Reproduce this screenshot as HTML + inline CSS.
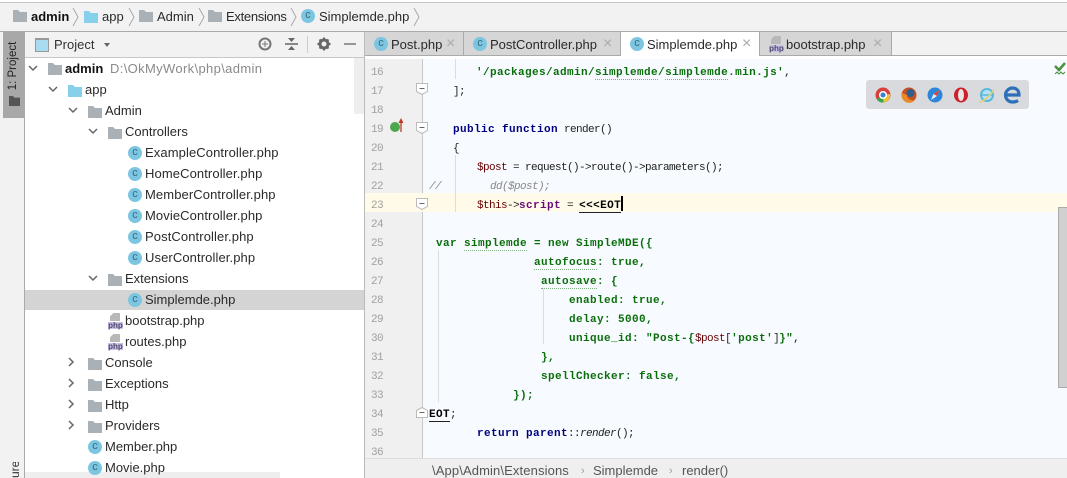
<!DOCTYPE html>
<html><head><meta charset="utf-8">
<style>
html,body{margin:0;padding:0;width:1067px;height:478px;overflow:hidden;background:#fff}
body{position:relative;font-family:"Liberation Sans",sans-serif;font-size:13px;color:#222}
.a{position:absolute}
.t{position:absolute;white-space:nowrap;line-height:18px;height:18px;font-size:13px;color:#2a2a2a}
.c{position:absolute;width:14px;height:14px;border-radius:50%;background:#7cc6e2;color:#3a6a80;font-size:11px;line-height:13px;text-align:center}
.m{position:absolute;white-space:pre;font-family:"Liberation Mono",monospace;font-size:11px;letter-spacing:-.6px;line-height:14px;height:14px;color:#222}
.n{position:absolute;left:371px;width:20px;font-family:"Liberation Mono",monospace;font-size:11px;letter-spacing:-.6px;line-height:14px;color:#a0a0a0}
.g{color:#0a6e0a;font-weight:bold;letter-spacing:.4px}.b{color:#000080;font-weight:bold;letter-spacing:.4px}.r{color:#660000;font-weight:normal;letter-spacing:-.6px}.p{color:#660e7a;font-weight:bold;letter-spacing:.4px}.k{color:#000;font-weight:bold;letter-spacing:.4px}.d{color:#222;font-weight:normal;letter-spacing:-.6px}
.w{border-bottom:1px dotted #7fae7f}
.tab{position:absolute;top:32px;height:23px;background:#d6d6d6;border-right:1px solid #aaa}
.x{position:absolute;color:#aaa;font-size:16px;line-height:18px}
.ph{position:absolute;width:15px;height:16px}
.ph i{position:absolute;left:2px;top:0;width:10px;height:8px;background:#b8b8b8;clip-path:polygon(35% 0,100% 0,100% 100%,0 100%,0 40%)}
.ph b{position:absolute;left:0;top:9px;width:15px;height:7px;background:#cdbfe6;color:#4a4a6a;font:bold 8px/7px "Liberation Sans",sans-serif;text-align:center}
</style></head><body>
<svg width="0" height="0" style="position:absolute"><defs>
<symbol id="f" viewBox="0 0 14 12"><path d="M0 0h5l2 2h7v10H0z"/></symbol>
</defs></svg>

<!-- top bar -->
<div class="a" style="left:0;top:0;width:1067px;height:32px;background:#f2f2f2"></div>
<div class="a" style="left:0;top:0;width:1067px;height:2px;background:#fff"></div>
<div class="a" style="left:0;top:2px;width:1067px;height:1px;background:#c8c8c8"></div>
<div class="a" style="left:0;top:31px;width:1067px;height:1px;background:#aaa"></div>
<svg class="a" style="left:13px;top:10px" width="14" height="12" fill="#a9b1b7"><use href="#f"/></svg>
<div class="t" style="left:31px;top:8px;font-weight:bold;color:#111">admin</div>
<svg class="a" style="left:72px;top:7px" width="8" height="20" fill="none" stroke="#aaa"><path d="M1 1l5 9-5 9"/></svg>
<svg class="a" style="left:84px;top:11px" width="14" height="12" fill="#86d0ec"><use href="#f"/></svg>
<div class="t" style="left:102px;top:8px">app</div>
<svg class="a" style="left:128px;top:7px" width="8" height="20" fill="none" stroke="#aaa"><path d="M1 1l5 9-5 9"/></svg>
<svg class="a" style="left:139px;top:10px" width="14" height="12" fill="#a9b1b7"><use href="#f"/></svg>
<div class="t" style="left:157px;top:8px">Admin</div>
<svg class="a" style="left:198px;top:7px" width="8" height="20" fill="none" stroke="#aaa"><path d="M1 1l5 9-5 9"/></svg>
<svg class="a" style="left:208px;top:10px" width="14" height="12" fill="#a9b1b7"><use href="#f"/></svg>
<div class="t" style="left:226px;top:8px;letter-spacing:-.3px">Extensions</div>
<svg class="a" style="left:290px;top:7px" width="8" height="20" fill="none" stroke="#aaa"><path d="M1 1l5 9-5 9"/></svg>
<div class="c" style="left:301px;top:9px">c</div>
<div class="t" style="left:319px;top:8px">Simplemde.php</div>
<svg class="a" style="left:413px;top:7px" width="8" height="20" fill="none" stroke="#aaa"><path d="M1 1l5 9-5 9"/></svg>

<!-- left strip -->
<div class="a" style="left:0;top:32px;width:3px;height:446px;background:#f2f2f2"></div>
<div class="a" style="left:3px;top:32px;width:21px;height:86px;background:#a8a8a8"></div>
<div class="a" style="left:3px;top:118px;width:21px;height:360px;background:#f2f2f2"></div>
<div class="a" style="left:24px;top:32px;width:1px;height:446px;background:#aaa"></div>
<div class="a" style="left:-12px;top:57px;width:50px;height:18px;font-size:11.500px;line-height:18px;color:#222;transform:rotate(-90deg);white-space:nowrap;text-align:center">1: Project</div>
<svg class="a" style="left:9px;top:96px" width="11" height="10" fill="#555" preserveAspectRatio="none" viewBox="0 0 14 12"><path d="M0 0h5l2 2h7v10H0z"/></svg>
<div class="a" style="left:7px;top:462px;width:16px;height:16px;font-size:12px;line-height:16px;color:#333;overflow:hidden;writing-mode:vertical-rl;transform:rotate(180deg);white-space:nowrap">ure</div>

<!-- project header -->
<div class="a" style="left:25px;top:32px;width:339px;height:25px;background:#f2f2f2;border-bottom:1px solid #c8c8c8"></div>
<div class="a" style="left:35px;top:38px;width:12px;height:11px;border:1px solid #999;border-top-width:2px;background:#a9dcf0"></div>
<div class="t" style="left:54px;top:36px;font-size:13px;color:#333">Project</div>
<div class="a" style="left:104px;top:43px;width:0;height:0;border:3.500px solid transparent;border-top:4px solid #666"></div>
<svg class="a" style="left:258px;top:36px" width="100" height="18" fill="none" stroke="#777" stroke-width="2">
<circle cx="7" cy="8" r="5.500"/><path d="M7 5v6M4 8h6" stroke-width="1"/>
<path stroke-width="1.500" stroke="#666" d="M27 8h13"/><path fill="#666" stroke="none" d="M30 2h7l-3.500 4zM30 14h7l-3.500-4z"/>
<circle cx="66" cy="8" r="4" stroke="#666" stroke-width="3"/><path d="M66 1.500v3M66 11.500v3M59.500 8h3M69.500 8h3M61.500 3.500l2 2M70.500 3.500l-2 2M61.500 12.500l2-2M70.500 12.500l-2-2" stroke="#666" stroke-width="2"/>
<path d="M86 8h12" stroke-width="1.500"/></svg>
<div class="a" style="left:307px;top:36px;width:1px;height:17px;background:#ccc"></div>

<!-- tree -->
<div class="a" style="left:25px;top:290px;width:339px;height:20px;background:#d4d4d4"></div>
<div class="a" style="left:354px;top:58px;width:10px;height:56px;background:#eee"></div>
<div class="a" style="left:25px;top:472px;width:255px;height:6px;background:#eee"></div>

<svg class="a" style="left:25px;top:58px" width="100" height="390" fill="none" stroke="#666" stroke-width="1.500">
<path d="M4 8l4 4 4-4M24 29l4 4 4-4M44 50l4 4 4-4M64 71l4 4 4-4M64 218l4 4 4-4"/>
<path d="M44 300l4 4-4 4M44 321l4 4-4 4M44 342l4 4-4 4M44 363l4 4-4 4"/>
</svg>

<svg class="a" style="left:48px;top:63px" width="14" height="12" fill="#a9b1b7"><use href="#f"/></svg>
<div class="t" style="left:65px;top:60px;font-weight:bold;color:#111">admin</div>
<div class="t" style="left:110px;top:60px;color:#8a8a8a;font-size:13px;letter-spacing:.35px">D:\OkMyWork\php\admin</div>
<svg class="a" style="left:68px;top:85px" width="14" height="12" fill="#86d0ec"><use href="#f"/></svg>
<div class="t" style="left:85px;top:81px">app</div>
<svg class="a" style="left:88px;top:106px" width="14" height="12" fill="#a9b1b7"><use href="#f"/></svg>
<div class="t" style="left:105px;top:102px">Admin</div>
<svg class="a" style="left:108px;top:127px" width="14" height="12" fill="#a9b1b7"><use href="#f"/></svg>
<div class="t" style="left:125px;top:123px">Controllers</div>
<div class="c" style="left:128px;top:146px">c</div><div class="t" style="left:145px;top:144px;letter-spacing:.1px">ExampleController.php</div>
<div class="c" style="left:128px;top:167px">c</div><div class="t" style="left:145px;top:165px;letter-spacing:.1px">HomeController.php</div>
<div class="c" style="left:128px;top:188px">c</div><div class="t" style="left:145px;top:186px;letter-spacing:.1px">MemberController.php</div>
<div class="c" style="left:128px;top:209px">c</div><div class="t" style="left:145px;top:207px;letter-spacing:.1px">MovieController.php</div>
<div class="c" style="left:128px;top:230px">c</div><div class="t" style="left:145px;top:228px;letter-spacing:.1px">PostController.php</div>
<div class="c" style="left:128px;top:251px">c</div><div class="t" style="left:145px;top:249px;letter-spacing:.1px">UserController.php</div>
<svg class="a" style="left:108px;top:274px" width="14" height="12" fill="#a9b1b7"><use href="#f"/></svg>
<div class="t" style="left:125px;top:270px">Extensions</div>
<div class="c" style="left:128px;top:293px">c</div><div class="t" style="left:145px;top:291px">Simplemde.php</div>
<div class="ph" style="left:108px;top:313px"><i></i><b>php</b></div>
<div class="t" style="left:125px;top:312px">bootstrap.php</div>
<div class="ph" style="left:108px;top:334px"><i></i><b>php</b></div>
<div class="t" style="left:125px;top:333px">routes.php</div>
<svg class="a" style="left:88px;top:358px" width="14" height="12" fill="#a9b1b7"><use href="#f"/></svg>
<div class="t" style="left:105px;top:354px">Console</div>
<svg class="a" style="left:88px;top:379px" width="14" height="12" fill="#a9b1b7"><use href="#f"/></svg>
<div class="t" style="left:105px;top:375px">Exceptions</div>
<svg class="a" style="left:88px;top:400px" width="14" height="12" fill="#a9b1b7"><use href="#f"/></svg>
<div class="t" style="left:105px;top:396px">Http</div>
<svg class="a" style="left:88px;top:421px" width="14" height="12" fill="#a9b1b7"><use href="#f"/></svg>
<div class="t" style="left:105px;top:417px">Providers</div>
<div class="c" style="left:88px;top:440px">c</div><div class="t" style="left:105px;top:438px">Member.php</div>
<div class="c" style="left:88px;top:461px">c</div><div class="t" style="left:105px;top:459px">Movie.php</div>

<!-- tabs -->
<div class="a" style="left:364px;top:32px;width:703px;height:23px;background:#f2f2f2"></div>
<div class="a" style="left:364px;top:55px;width:703px;height:1px;background:#aaa"></div>
<div class="a" style="left:364px;top:56px;width:703px;height:3px;background:#fff"></div>
<div class="a" style="left:364px;top:32px;width:1px;height:446px;background:#bbb"></div>
<div class="tab" style="left:365px;width:98px"></div>
<div class="tab" style="left:464px;width:156px"></div>
<div class="tab" style="left:621px;width:138px;background:#fff;height:24px"></div>
<div class="tab" style="left:760px;width:131px"></div>
<div class="c" style="left:374px;top:37px">c</div><div class="t" style="left:391px;top:36px">Post.php</div><div class="x" style="left:446px;top:35px">×</div>
<div class="c" style="left:473px;top:37px">c</div><div class="t" style="left:490px;top:36px">PostController.php</div><div class="x" style="left:603px;top:35px">×</div>
<div class="c" style="left:630px;top:37px">c</div><div class="t" style="left:647px;top:36px">Simplemde.php</div><div class="x" style="left:742px;top:35px">×</div>
<div class="ph" style="left:769px;top:36px"><i></i><b>php</b></div>
<div class="t" style="left:786px;top:36px">bootstrap.php</div><div class="x" style="left:873px;top:35px">×</div>

<!-- editor -->
<div class="a" style="left:365px;top:59px;width:58px;height:399px;background:#f0f0f0"></div>
<div class="a" style="left:423px;top:59px;width:644px;height:399px;background:#f7fbff"></div>
<div class="a" style="left:422px;top:59px;width:1px;height:399px;background:#c8c8c8"></div>
<div class="a" style="left:365px;top:193px;width:702px;height:19px;background:#fffbe8"></div>
<div class="a" style="left:1058px;top:207px;width:9px;height:179px;background:#d0d0d0;border:1px solid #aaa;border-right:0"></div>
<div class="a" style="left:455px;top:155px;width:1px;height:57px;background:#ddd"></div>
<div class="a" style="left:438px;top:250px;width:1px;height:152px;background:#ddd"></div>
<div class="a" style="left:543px;top:288px;width:1px;height:56px;background:#ddd"></div>
<div class="a" style="left:455px;top:59px;width:1px;height:20px;background:#ddd"></div>

<div class="n" style="top:66px">16</div><div class="n" style="top:85px">17</div><div class="n" style="top:104px">18</div><div class="n" style="top:123px">19</div><div class="n" style="top:142px">20</div><div class="n" style="top:161px">21</div><div class="n" style="top:180px">22</div><div class="n" style="top:199px">23</div><div class="n" style="top:218px">24</div><div class="n" style="top:237px">25</div><div class="n" style="top:256px">26</div><div class="n" style="top:275px">27</div><div class="n" style="top:294px">28</div><div class="n" style="top:313px">29</div><div class="n" style="top:332px">30</div><div class="n" style="top:351px">31</div><div class="n" style="top:370px">32</div><div class="n" style="top:389px">33</div><div class="n" style="top:408px">34</div><div class="n" style="top:427px">35</div><div class="n" style="top:446px">36</div>

<!-- gutter marks -->
<svg class="a" style="left:388px;top:115px" width="16" height="18"><circle cx="7" cy="12" r="5" fill="#4ea64e"/><path d="M13 17V5" stroke="#c0392b" stroke-width="1.300"/><path d="M10.500 8L13 3l2.500 5z" fill="#c0392b"/></svg>
<svg class="a" style="left:416px;top:83px" width="13" height="340" fill="#fff" stroke="#bbb">
<path d="M.5 .5h11v8l-5.500 3-5.500-3z"/><path d="M3.500 5.500h5" stroke="#666"/>
<path d="M.5 39.500h11v8l-5.500 3-5.500-3z"/><path d="M3.500 44.500h5" stroke="#666"/>
<path d="M.5 115.500h11v8l-5.500 3-5.500-3z"/><path d="M3.500 120.500h5" stroke="#666"/>
<path d="M.5 327.500l5.500-3 5.500 3v7h-11z"/><path d="M3.500 329.500h5" stroke="#666"/>
</svg>

<!-- code -->
<div class="m g" style="left:476px;top:66px">'/packages/admin/<span class="w">simplemde</span>/<span class="w">simplemde</span>.min.js'<span class="d">,</span></div>
<div class="m" style="left:453px;top:85px">];</div>
<div class="m" style="left:453px;top:123px"><span class="b">public function</span> render()</div>
<div class="m" style="left:453px;top:142px">{</div>
<div class="m" style="left:477px;top:161px"><span class="r">$post</span> = request()-&gt;route()-&gt;parameters();</div>
<div class="m" style="left:429px;top:180px;color:#888;font-style:italic">//</div>
<div class="m" style="left:490px;top:180px;color:#888;font-style:italic">dd($post);</div>
<div class="m" style="left:477px;top:199px"><span class="r">$this</span>-&gt;<span class="p">script</span> = <span class="k" style="border-bottom:1px solid #222">&lt;&lt;&lt;EOT</span></div>
<div class="a" style="left:621px;top:196px;width:2px;height:15px;background:#000"></div>
<div class="m g" style="left:436px;top:237px">var <span class="w">simplemde</span> = new SimpleMDE({</div>
<div class="m g" style="left:534px;top:256px"><span class="w">autofocus</span>: true,</div>
<div class="m g" style="left:541px;top:275px"><span class="w">autosave</span>: {</div>
<div class="m g" style="left:569px;top:294px">enabled: true,</div>
<div class="m g" style="left:569px;top:313px">delay: 5000,</div>
<div class="m g" style="left:569px;top:332px">unique_id: "Post-{<span class="r">$post</span><span class="d">[</span>'post'<span class="d">]</span>}"<span class="d">,</span></div>
<div class="m g" style="left:541px;top:351px">},</div>
<div class="m g" style="left:541px;top:370px">spellChecker: false,</div>
<div class="m g" style="left:513px;top:389px">});</div>
<div class="m" style="left:429px;top:408px"><span class="k" style="border-bottom:1px solid #222">EOT</span>;</div>
<div class="m" style="left:477px;top:427px"><span class="b">return parent</span>::<i>render</i>();</div>

<!-- check -->
<svg class="a" style="left:1054px;top:62px" width="12" height="13" fill="none" stroke="#4c8f3c" stroke-width="2.500"><path d="M1 4l4 4 6-7"/><path stroke-width="1" d="M1 12l2-2 2 2 2-2 2 2 2-2"/></svg>

<!-- browser popup -->
<div class="a" style="left:866px;top:80px;width:163px;height:29px;background:#d8dade;border-radius:3px"></div>
<svg class="a" style="left:866px;top:80px" width="163" height="29">
<circle cx="17" cy="15" r="7.500" fill="#d9403a"/><path d="M17 15L10.500 19a7.500 7.500 0 0 0 7 3.500z" fill="#3ba24e"/><path d="M17 15l7-1a7.500 7.500 0 0 1-6.500 8.500z" fill="#f2c230"/><circle cx="17" cy="15" r="3.300" fill="#3d7fd1" stroke="#fff" stroke-width="1.500"/>
<circle cx="43" cy="15" r="7.500" fill="#c8501f"/><circle cx="44.500" cy="13" r="4" fill="#2f5f92"/><path d="M36 13a7.500 7.500 0 0 0 13 7c-4 1-8-1-8-5z" fill="#e8892a"/>
<circle cx="69" cy="15" r="7.500" fill="#2d86d8"/><path d="M73.500 10l-6 4-2.500 6 6-4z" fill="#e8eef5"/><path d="M73.500 10l-6 4 3.500 2z" fill="#d9403a"/>
<ellipse cx="95" cy="15" rx="7" ry="7.500" fill="#cf1f27"/><ellipse cx="95" cy="15" rx="3" ry="6" fill="#e9e4e6"/>
<circle cx="121" cy="15" r="6" fill="#b7e2f2" stroke="#59b8dc" stroke-width="2"/><path d="M115 15h12" stroke="#59b8dc" stroke-width="1.500"/><path d="M113 22c2 1 12-6 15-13" fill="none" stroke="#e6d070" stroke-width="1.500"/>
<path d="M140 15h13c0-5-3-7-6.500-7s-7 3-7 7 3 7 7 7c2 0 4-.5 5.500-1.500" fill="none" stroke="#2d70b8" stroke-width="3.200"/>
</svg>

<!-- bottom breadcrumb -->
<div class="a" style="left:365px;top:458px;width:702px;height:20px;background:#efefef;border-top:1px solid #ddd;box-sizing:border-box"></div>
<div class="t" style="left:432px;top:462px;color:#555;letter-spacing:.12px">\App\Admin\Extensions</div>
<div class="t" style="left:581px;top:462px;color:#999;font-size:11px">›</div>
<div class="t" style="left:593px;top:462px;color:#555">Simplemde</div>
<div class="t" style="left:669px;top:462px;color:#999;font-size:11px">›</div>
<div class="t" style="left:682px;top:462px;color:#555">render()</div>
</body></html>
